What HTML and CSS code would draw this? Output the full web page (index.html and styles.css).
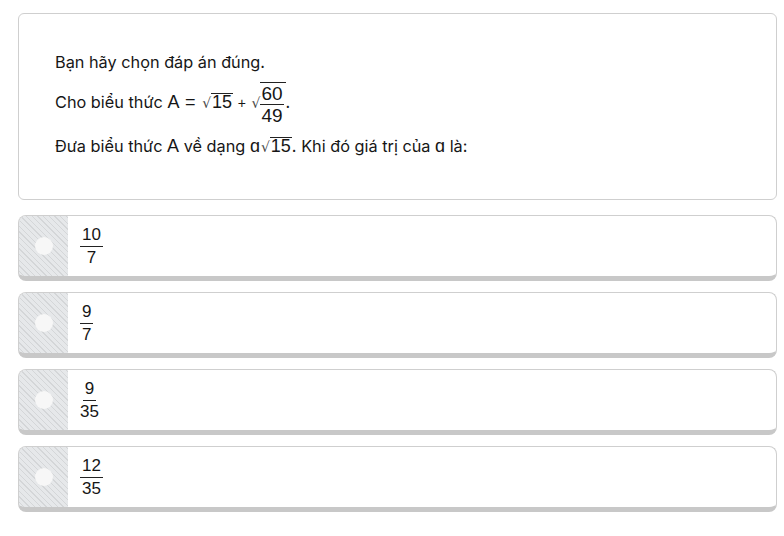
FILE: index.html
```html
<!DOCTYPE html>
<html lang="vi">
<head>
<meta charset="utf-8">
<link rel="stylesheet" href="styles.css">
</head>
<body>
<div class="page">
  <div class="question">
    <p class="line">Bạn hãy chọn đáp án đúng.</p>
    <p class="line l2">Cho biểu thức <span class="m">A</span> <span class="m eq">=</span> <span class="sq">√</span><span class="m ov">15</span> <span class="m plus">+</span> <span class="sq">√</span><span class="ovf"><span class="frac ff"><span class="num">60</span><span class="den">49</span></span></span>.</p>
    <p class="line l3">Đưa biểu thức <span class="m">A</span> về dạng <span class="m">ɑ</span><span class="sq">√</span><span class="m ov">15</span>. Khi đó giá trị của <span class="m">ɑ</span> là:</p>
  </div>
  <div class="options">
    <div class="opt"><div class="side"><span class="dot"></span></div><div class="body"><span class="frac of"><span class="num">10</span><span class="den">7</span></span></div></div>
    <div class="opt"><div class="side"><span class="dot"></span></div><div class="body"><span class="frac of"><span class="num">9</span><span class="den">7</span></span></div></div>
    <div class="opt"><div class="side"><span class="dot"></span></div><div class="body"><span class="frac of"><span class="num">9</span><span class="den">35</span></span></div></div>
    <div class="opt"><div class="side"><span class="dot"></span></div><div class="body"><span class="frac of"><span class="num">12</span><span class="den">35</span></span></div></div>
  </div>
</div>
</body>
</html>
```
FILE: styles.css
```css
html, body { margin: 0; padding: 0; background: #fff; }
body { font-family: Inter, "Noto Sans", sans-serif; color: #161616; font-size: 16.3px; }
.page { padding: 13px 7px 0 18px; }
.question {
  border: 1px solid #cfcfcf;
  border-radius: 6px;
  box-sizing: border-box;
  height: 187px;
  padding: 34px 36px 0 36px;
}
.line { margin: 0; line-height: 28px; }
.l2 { margin-top: 4px; line-height: 44px; }
.l3 { margin-top: 7px; }
.m { font-family: "Liberation Sans", Arial, sans-serif; font-size: 18px; }
.eq { margin: 0 1px; }
.plus { font-size: 14px; }
.sq { font-family: "DejaVu Sans", sans-serif; font-size: 14px; color: #444; margin-left: 1px; }
.ov { display: inline-block; border-top: 1px solid #222; line-height: 16px; padding: 0 1px; }
.ovf { display: inline-block; vertical-align: middle; border-top: 1px solid #222; padding: 1px 2px 0 0; line-height: 18px; }
.frac { display: inline-flex; flex-direction: column; align-items: center; vertical-align: middle; }
.ff { font-family: "Liberation Sans", Arial, sans-serif; font-size: 19px; line-height: 19px; display: flex; }
.ff .num { border-bottom: 1px solid #222; padding: 0 1px 1px; }
.ff .den { padding-top: 1px; }
.options { margin-top: 15px; display: flex; flex-direction: column; gap: 11px; }
.opt {
  display: flex;
  height: 66px;
  box-sizing: border-box;
  border: 1px solid #cfcfcf;
  border-bottom: 5px solid #c8c8c8;
  border-radius: 8px;
  overflow: hidden;
}
.side {
  width: 49px;
  flex: none;
  display: flex;
  align-items: center;
  justify-content: center;
  background-color: #e4e6e8;
  background-image: repeating-linear-gradient(45deg, #e6e8ea 0 3px, #d4d6d8 3px 4px);
  box-shadow: 0 5px 0 #9c9c9c;
}
.dot { width: 18px; height: 18px; border-radius: 50%; background: #f7f7f7; }
.body { flex: 1; display: flex; align-items: center; padding-left: 12px; }
.of { font-family: "Liberation Sans", Arial, sans-serif; font-size: 17px; line-height: 18px; }
.of .num { padding: 0 2px 2px; border-bottom: 1.5px solid #222; }
.of .den { padding-top: 2px; }
```
